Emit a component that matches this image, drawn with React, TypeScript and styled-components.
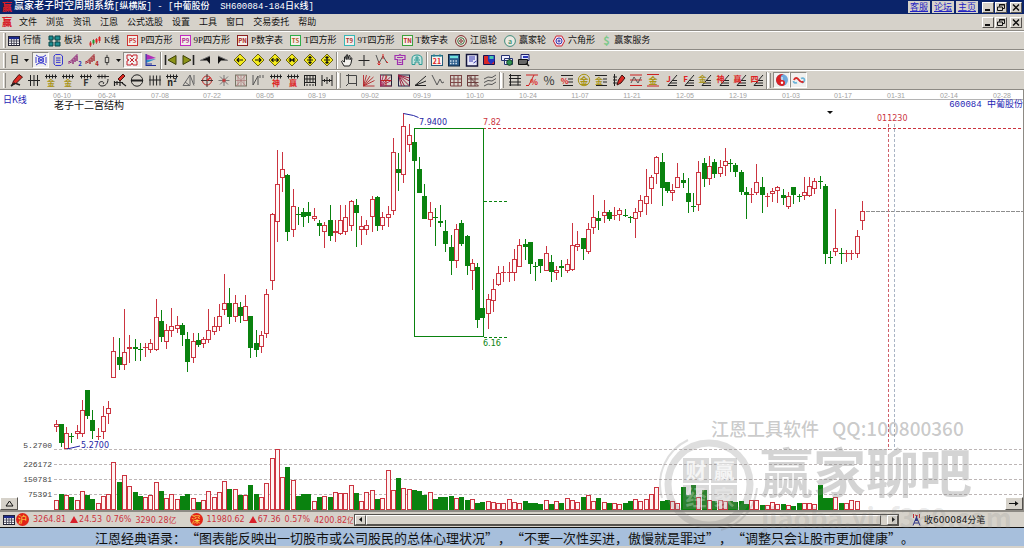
import React from "react";
import styled, { createGlobalStyle, css } from "styled-components";

const CJK = '"Noto Sans CJK SC", sans-serif';

const GlobalStyle = createGlobalStyle`
  * { box-sizing: border-box; }
  body { margin: 0; background: #d6d2ca; font-family: ${CJK}; font-size: 9px; color: #111; }
  button { font: inherit; padding: 0; margin: 0; border: 0; background: none; color: inherit; }
  svg { display: block; flex: none; }
`;

const RED = "#cb3440";
const GREEN = "#0a820f";

const raised = css`
  border: 1px solid;
  border-color: #fff #55524e #55524e #fff;
  background: #d6d2ca;
`;

/* ---------- window chrome ---------- */

const Window = styled.div`
  display: flex;
  flex-direction: column;
  min-height: 100vh;
`;

const TitleBar = styled.header`
  display: flex;
  align-items: center;
  height: 14px;
  padding: 0 2px;
  background: #0b246a;
  color: #fff;
`;

const Title = styled.h1`
  flex: 1;
  margin: 0 0 0 2px;
  font-family: "Liberation Mono", ${CJK};
  font-size: 10px;
  line-height: 13px;
  font-weight: 500;
  white-space: pre;
`;

const TitleCode = styled.span`
  font-size: 9px;
`;

const TitleLinks = styled.nav`
  display: flex;
  gap: 2px;
  margin-right: 4px;
`;

const TitleLink = styled.a`
  width: 22px;
  height: 12px;
  background: #d6d2ca;
  color: #2222c4;
  font-size: 9px;
  line-height: 11px;
  text-align: center;
  text-decoration: underline;
`;

const WinButtons = styled.div`
  display: flex;
  gap: 1px;
`;

const WinButton = styled.button`
  ${raised}
  display: grid;
  place-items: center;
  width: 12px;
  height: 11px;
  &:last-child { margin-left: 2px; }
`;

const MenuBar = styled.nav`
  display: flex;
  align-items: center;
  height: 17px;
  padding: 0 2px;
  gap: 9px;
  border-bottom: 1px solid #8d8a84;
  background: #d6d2ca;
`;

const MenuItem = styled.button`
  font-size: 9px;
  line-height: 12px;
  &:first-of-type { margin-left: -2px; }
`;

const Spacer = styled.div`
  flex: 1;
`;

const Bar = styled.div<{ $h: number }>`
  display: flex;
  align-items: center;
  height: ${(p) => p.$h}px;
  padding-left: 3px;
  border-top: 1px solid #fff;
  border-bottom: 1px solid #8d8a84;
  background: #d6d2ca;
`;

const Grip = styled.span`
  width: 3px;
  height: 15px;
  margin-right: 2px;
  border-left: 1px solid #fff;
  border-right: 1px solid #8d8a84;
`;

const Divider = styled.span`
  width: 2px;
  height: 17px;
  border-left: 1px solid #8d8a84;
  border-right: 1px solid #fff;
`;

const LabelRow = styled.div`
  display: flex;
  gap: 7px;
`;

const LabelButton = styled.button`
  display: flex;
  align-items: center;
  gap: 3px;
  font-family: "Liberation Serif", ${CJK};
  font-size: 9px;
  line-height: 13px;
  white-space: nowrap;
`;

const PeriodPicker = styled(LabelButton)`
  gap: 5px;
  width: 24px;
  padding-left: 2px;
  font-weight: 500;
`;

const IconGroup = styled.div<{ $w: number }>`
  display: grid;
  grid-auto-flow: column;
  grid-auto-columns: 1fr;
  width: ${(p) => p.$w}px;
`;

const IconButton = styled.button<{ $on?: boolean }>`
  display: grid;
  place-items: center;
  height: 16px;
  border: 1px solid transparent;
  ${(p) => p.$on && css`
    background: #f1f0ee;
    border-color: #8d8a84 #fff #fff #8d8a84;
  `}
`;

/* ---------- icons ---------- */

const Svg = ({ children, w = 14, h = 14, box }: { children: React.ReactNode; w?: number; h?: number; box?: string }) => (
  <svg width={w} height={h} viewBox={box ?? "0 0 14 14"} overflow="visible" fill="none" stroke="#222" strokeWidth="1" aria-hidden="true">
    {children}
  </svg>
);

const Glyph = ({ t, x = 7, y = 12, size = 8, fill = "#d22", weight = 700 }: { t: string; x?: number; y?: number; size?: number; fill?: string; weight?: number }) => (
  <text x={x} y={y} fontSize={size} fill={fill} stroke="none" fontWeight={weight} textAnchor="middle" fontFamily='"Noto Sans CJK SC", sans-serif'>{t}</text>
);

const TableIcon = () => (
  <Svg w={12} h={12} box="0 0 12 12">
    <rect x=".5" y="1.5" width="11" height="9" fill="#fff" stroke="#223" />
    <path d="M1 3h10" stroke="#1b2a8c" strokeWidth="2.4" />
    <path d="M1 6h10M1 8.4h10M3.5 4v6M6 4v6M8.5 4v6" stroke="#445" strokeWidth=".9" />
  </Svg>
);

const BlocksIcon = () => (
  <Svg w={13} h={12} box="0 0 13 12">
    <path d="M1 1h4v4H1zM7 1h5v4H7zM1 7h4v4H1zM7 7h5v4H7z" fill="#1c8f92" stroke="#0b4446" />
    <path d="M5 3h2M9 5v2M3 5v2" stroke="#0b4446" />
  </Svg>
);

const KIcon = () => (
  <Svg w={12} h={12} box="0 0 12 12">
    <path d="M1.5 6v6M4.5 4v6M7.5 3v6M10.5 1v7" stroke="#933" strokeWidth=".7" />
    <path d="M1.5 7.5v3M7.5 4v3.5" stroke="#e02020" strokeWidth="2" />
    <path d="M4.5 5v3.5" stroke="#1a9a30" strokeWidth="2" />
    <path d="M10.5 2v4" stroke="#e02020" strokeWidth="2" />
  </Svg>
);

const Boxed = ({ t, frame, ink }: { t: string; frame: string; ink: string }) => (
  <Svg w={11} h={11} box="0 0 11 11">
    <rect x=".5" y=".5" width="10" height="10" fill="#f4efe9" stroke={frame} />
    <Glyph t={t} x={5.5} y={8} size={6} fill={ink} />
  </Svg>
);

const Wheel = ({ a, b, t }: { a: string; b: string; t?: string }) => (
  <Svg w={12} h={12} box="0 0 12 12">
    <circle cx="6" cy="6" r="5.4" stroke={a} fill="#ece9e2" />
    {t ? <Glyph t={t} x={6} y={8.5} size={7} fill={b} /> : (
      <>
        <circle cx="6" cy="6" r="3.3" stroke={b} />
        <circle cx="6" cy="6" r="1.3" stroke={a} />
      </>
    )}
  </Svg>
);

const HexIcon = () => (
  <Svg w={12} h={12} box="0 0 12 12">
    <path d="M3.2 1h5.6L11.6 6 8.8 11H3.2L.4 6z" stroke="#c23" fill="#f2e4ee" />
    <circle cx="6" cy="6" r="3" stroke="#3238b0" />
    <circle cx="6" cy="6" r="1" stroke="#3238b0" />
  </Svg>
);

const DollarIcon = () => (
  <Svg w={9} h={12} box="0 0 9 12">
    <Glyph t="$" x={4.5} y={10} size={11} fill="#7cc98a" />
  </Svg>
);

const Diamond = ({ d }: { d: string }) => (
  <Svg>
    <path d="M7 1l6 6-6 6-6-6z" fill="#f4ec1c" stroke="#6c6410" />
    <path d={d} stroke="#111" strokeWidth="1.1" />
  </Svg>
);

const toolbar2a: [string, React.ReactNode, boolean?][] = [
  ["周期网", <Svg key="a"><g stroke="#3a3ad0"><path d="M2 2l3 2h4l3-2M2 12l3-2h4l3 2M2 4v6M12 4v6" /><circle cx="7" cy="7" r="2.5" /><path d="M4 5l6 4M10 5l-6 4" /></g></Svg>, true],
  ["文档", <Svg key="b"><path d="M3 3l1.5-1.5h5L11.5 3v8L10 12.5H4.5L3 11zM5 5h4.5M5 7.2h4.5M5 9.4h4.5" stroke="#3a3ad0" /></Svg>],
  ["二分线", <Svg key="c"><path d="M1 11V8l2 2V7h2v4V5h2v4V3h2v5V1" stroke="#93307c" /><Glyph t="2" x={12} y={13} size={6} fill="#2a2ab8" /></Svg>],
  ["四分线", <Svg key="d"><path d="M1 11V8l2 2V7h2v4V5h2v4V3h2v5V1" stroke="#a83038" /><Glyph t="4" x={12} y={13} size={6} fill="#b02020" /></Svg>],
];

const playRow: [string, React.ReactNode][] = [
  ["最前", <Svg key="1"><path d="M1.5 2v10" strokeWidth="1.6" /><path d="M12 2.5v9L4 7z" fill="#8c9418" stroke="#3c4008" /></Svg>],
  ["最后", <Svg key="2"><path d="M12.5 2v10" strokeWidth="1.6" /><path d="M2 2.5v9L10 7z" fill="#8c9418" stroke="#3c4008" /></Svg>],
  ["后退", <Svg key="3"><path d="M12 3v8L9 7.5H2z" fill="#111" stroke="none" /><path d="M12 3L2 7.5" stroke="#777" /></Svg>],
  ["前进", <Svg key="4"><path d="M2 3v8l3-3.5h7z" fill="#111" stroke="none" /><path d="M2 3l10 4.5" stroke="#777" /></Svg>],
  ["左移", <Diamond key="5" d="M4 7h6M6 5L4 7l2 2" />],
  ["右移", <Diamond key="6" d="M4 7h6M8 5l2 2-2 2" />],
  ["横向放大", <Diamond key="7" d="M3.5 7h7M5.5 5.2L3.5 7l2 1.8M8.5 5.2l2 1.8-2 1.8" />],
  ["横向缩小", <Diamond key="8" d="M3.5 7h7M4.5 5l2 2-2 2M9.5 5l-2 2 2 2" />],
  ["纵向放大", <Diamond key="9" d="M7 3.5v7M5.5 5L7 3.5 8.5 5M5.5 9L7 10.5 8.5 9M4 7h6" />],
  ["纵向缩小", <Diamond key="10" d="M7 3v8M5.5 4L7 5.5 8.5 4M5.5 10L7 8.5 8.5 10M4 7h6" />],
];

const handRow: [string, React.ReactNode][] = [
  ["平移", <Svg key="1"><path d="M4 13L1.5 8.5l1-.7L4.5 9V4l1-.5.8 3V2l1.2-.3.5 4.8L9 2.5l1 .3v4l1-2 1 .5-1 5L9.5 13z" fill="#f4f2ee" /></Svg>],
  ["十字光标", <Svg key="2"><path d="M7 2v11M1.5 7.5h11" /></Svg>],
  ["波段", <Svg key="3"><path d="M1 2l3 8 4-7 4 7" stroke="#555" /><path d="M4 8v4M8 1v5M2.5 10.5L4 12l1.5-1.5M11 8l2 2" stroke="#d22" /></Svg>],
  ["叠加", <Svg key="4"><path d="M2 2.5h4l1-1 1 1h4v4H9.5v5h-5v-5H2zM4 4.5h6M5.5 7h3M5.5 9.5h3" stroke="#a030b0" strokeWidth="1.2" /></Svg>],
  ["云图", <Svg key="5"><path d="M2 11.5V6c0-3 2-4 5-4s5 1 5 4v5.5H9V9H5v2.5zM5 5h4M4 7h6M7 3v5" stroke="#2c9a94" fill="#c4e2dd" /></Svg>],
];

const appRow: [string, React.ReactNode][] = [
  ["日历", <Svg key="1"><rect x="1.5" y="2.5" width="11" height="10" fill="#f8f4f0" stroke="#255a7a" /><path d="M1.5 3h11M4 1v3M10 1v3" stroke="#2c8a98" /><Glyph t="21" y={11} size={7} /></Svg>],
  ["计算器", <Svg key="2"><rect x="1.5" y="1.5" width="11" height="11.5" fill="#2c5d8c" stroke="#0c2440" /><path d="M3 4h8" stroke="#6fe0dc" strokeWidth="2.4" /><path d="M3 8h8M3 10.5h8" stroke="#d7e4ee" strokeWidth="1.3" strokeDasharray="1.5 1.2" /></Svg>],
  ["笔记", <Svg key="3"><rect x="1.5" y="1.5" width="11" height="11.5" fill="#e8e8fa" stroke="#14143a" strokeWidth="1.5" /><path d="M4 4h6M4 6h6M4 8h4M8.5 10l3-2" stroke="#3434a8" /></Svg>],
  ["保存", <Svg key="4"><path d="M1.5 2.5h11v9h-11z" fill="#d82828" stroke="#141450" /><path d="M6 2.5h6.5V8L9 11.5 6 8z" fill="#2434c0" stroke="none" /><path d="M7.5 3h4v3h-4z" fill="#46c6b0" stroke="none" /></Svg>],
  ["导出图片", <Svg key="5"><path d="M1.5 2.5h8v5h-8zM4.5 5.5h8v6h-8z" fill="#eef" stroke="#243070" /><circle cx="9.5" cy="9.5" r="2.8" fill="#2f8f50" stroke="#143c22" /></Svg>],
  ["打印", <Svg key="6"><path d="M4 1.5h8v6H4z" fill="#dfe6ff" stroke="#202068" /><path d="M1.5 6.5h9v5h-9z" fill="#666" stroke="#111" /><path d="M6 4h5" stroke="#2c38b8" strokeWidth="2" /><path d="M9 10l3 3" strokeWidth="1.5" /></Svg>],
];

const Comb = ({ t, fill, size = 8 }: { t: string; fill: string; size?: number }) => (
  <Svg>
    <path d="M1 3.5h12M2.5 1.5v4M5.5 1.5v4M8.5 1.5v4M11.5 1.5v4" />
    <Glyph t={t} y={13} size={size} fill={fill} />
  </Svg>
);

const GOLD = "#a89418";

const drawA: [string, React.ReactNode][] = [
  ["画笔", <Svg key="1"><path d="M2 12l1.5-4L9 1.5 12.5 4 6 10.5z" fill="#dc2a24" stroke="#4a1410" /><path d="M1 13l4-3M6 10.5l4 1.5" strokeWidth="1.6" /></Svg>],
  ["等距线", <Svg key="2"><path d="M1 7.5h12M3.5 2v11M7 2v11M10.5 2v11" /></Svg>],
  ["黄金时间", <Comb key="3" t="金" fill={GOLD} />],
  ["黄金周期", <Comb key="4" t="金" fill={GOLD} />],
  ["斐波那契", <Comb key="5" t="F" fill="#333" size={9} />],
  ["螺旋", <Svg key="6"><path d="M1 3.5h12M3 1.5v4M6 1.5v4M9 1.5v4M12 6c0 5-3 7-6 7s-4-3-2-4 5 0 3 2" /></Svg>],
  ["标尺", <Svg key="7"><path d="M5 6l5-5 2 2-5 5z" fill="#dc2a24" stroke="#4a1410" /><path d="M1 9.5h9M1.5 8v5M4 8v4M7 8v5M9 10l4 3" strokeWidth="1.2" /></Svg>],
  ["圆周", <Svg key="8"><circle cx="7" cy="7.5" r="5.7" /><path d="M1 7.5h12M3 6v3M5 6v3M7 6v3M9 6v3M11 6v3" /></Svg>],
  ["周期线", <Svg key="9"><path d="M1 7h12M2 2.5v10M5.3 2.5v10M8.6 2.5v10M12 2.5v10" /></Svg>],
  ["平方", <Comb key="10" t="n²" fill="#222" size={9} />],
  ["三角", <Svg key="11"><path d="M1 12.5L8 2v10.5zM8 2l4 10.5M3 9l4 3M12 2v9" stroke="#666" /></Svg>],
  ["江恩圆", <Svg key="12"><circle cx="7" cy="7.5" r="4.5" stroke="#b22" /><path d="M7 1v13M1 7.5h12" stroke="#433" /><path d="M7 7.5l3.5-3" stroke="#d22" strokeWidth="1.5" /></Svg>],
  ["星形", <Svg key="13"><path d="M7 2v11M1.5 7.5h11M3 3.5l8 8M11 3.5l-8 8" stroke="#777" /><circle cx="7" cy="7.5" r="1.5" fill="#c33" stroke="#a55" /></Svg>],
  ["网格", <Svg key="14"><rect x="1.5" y="2" width="11" height="11" stroke="#776" /><path d="M2 2l10 11M12 2L2 13M7 2v11M1.5 7.5h11M4 2v11M10 2v11" stroke="#a77" strokeWidth=".7" /></Svg>],
  ["折线", <Svg key="15"><path d="M2 2v10M2 12l5-9v9M9 2v3M12 2v3" stroke="#555" /></Svg>],
  ["神奇数", <Comb key="16" t="神" fill="#d22" />],
  ["赢家数", <Comb key="17" t="赢" fill="#d22" />],
  ["格线", <Svg key="18"><path d="M1.5 2v11M12.5 2v11M1.5 2.5h11M1.5 9.5h11M4 2.5v7M7 2.5v7M10 2.5v7M1.5 6h11M3 12h2M6 12h2M9 12h2" /></Svg>],
  ["区间", <Svg key="19"><path d="M2 2v11M12 2v11M7 4v7M2 7.5h10M4.5 6v3M9.5 6v3" /></Svg>],
];

const Fan = ({ c }: { c: string }) => <path d="M1.5 13V2M1.5 13L4.5 2M1.5 13L8 3M1.5 13l10-9M1.5 13l11-5.5M1.5 13h11" stroke={c} strokeWidth=".9" />;

const drawB: [string, React.ReactNode][] = [
  ["矩形", <Svg key="1"><path d="M3.5 2.5h8v8h-8zM3.5 10.5L1 13M1 2.5h3M3.5 1v3M11.5 9v4" stroke="#444" /></Svg>],
  ["扇形", <Svg key="2"><Fan c="#b3262a" /></Svg>],
  ["江恩箱", <Svg key="3"><rect x="1.5" y="2" width="11" height="11" stroke="#223" /><Fan c="#a8285a" /><path d="M7 2v11M2 7.5h10" stroke="#b22" /></Svg>],
  ["反向箱", <Svg key="4"><rect x="1.5" y="2" width="11" height="11" stroke="#224" /><path d="M1.5 2l11 11M1.5 2l6 11M1.5 2l11 6M1.5 2l3 11M1.5 2l11 3" stroke="#9c1f42" /></Svg>],
  ["速度线", <Svg key="5"><path d="M1 12.5L12 3M1 12.5L12 8M1 12.5h11" /></Svg>],
  ["波浪", <Svg key="6"><path d="M1 2l5 10 3-6 2 4 2-1" stroke="#555" /></Svg>],
  ["方格", <Svg key="7"><path d="M1.5 2v11M5 2v11M9 2v11M12.5 2v11M1.5 2.5h11M1.5 6h11M1.5 9.5h11M1.5 13h11" stroke="#7c4444" /></Svg>],
  ["角度格", <Svg key="8"><path d="M1.5 2v11h11M5 2v11M9 2v11M1.5 2.5h11M1.5 6h11M1.5 9.5h11M1.5 2l11 11" stroke="#6a3c3c" /></Svg>],
  ["平行线", <Svg key="9"><path d="M1 6l4-2 4 .5L13 2M1 9.5l4-2 4 .5 4-2.5M1 13l4-2 4 .5L13 9" stroke="#555" /></Svg>],
];

const TopBot = ({ t, c, line = "#333" }: { t: string; c: string; line?: string }) => (
  <Svg><path d="M1 1.5h12M1 13h12" stroke={line} /><Glyph t={t} y={11} size={9} fill={c} /></Svg>
);

const Angle = ({ t, c }: { t: string; c: string }) => (
  <Svg><path d="M4 12.5L13 2M4 12.5h9M6 10h7M8 7.5h5" stroke="#222" /><Glyph t={t} x={4.5} y={9} size={8} fill={c} /></Svg>
);

const drawC: [string, React.ReactNode][] = [
  ["刻度", <Svg key="1"><path d="M2.5 1v12M1 2.5h12M1 5.5h12M1 9h12M1 12h12M10 2.5v10" /></Svg>],
  ["百分比一", <Svg key="2"><path d="M1 2h12M1 12.5h3M4 12L9 2" stroke="#c22" /><Glyph t="%" x={9} y={12} size={8} /></Svg>],
  ["百分比", <Svg key="3"><Glyph t="%" y={12} size={12} fill="#333" weight={400} /></Svg>],
  ["百分比线", <Svg key="4"><path d="M1 2.5h12M8 6h5M8 9h5M3 12.5h10" /><Glyph t="%" x={4.5} y={11} size={8} /></Svg>],
  ["黄金圆", <Svg key="5"><circle cx="7" cy="7" r="5.7" stroke={GOLD} /><Glyph t="金" y={10.5} size={9} fill={GOLD} /></Svg>],
  ["黄金线", <Svg key="6"><path d="M1 2.5h12M9 6h4M9 9h4M2 12.5h11" /><Glyph t="金" x={5} y={11} size={8} fill={GOLD} /></Svg>],
  ["笔标尺", <Svg key="7"><path d="M2.5 1v12M1 4h4M1 7h4M1 10h4" /><path d="M5 12l1.5-5L10 2l3 3-4 5z" fill="#dc2a24" stroke="#3a1410" /></Svg>],
  ["通道", <Svg key="8"><path d="M1 2h12M1 12.5h12M1 7h12" stroke="#c22" /><path d="M2 10l3-6 4 6 3-6" stroke="#555" /></Svg>],
  ["金通道", <TopBot key="9" t="金" c={GOLD} line="#c22" />],
  ["江恩角", <Angle key="10" t="J" c="#d22" />],
  ["F角", <Angle key="11" t="F" c="#d22" />],
  ["金角", <Angle key="12" t="金" c={GOLD} />],
  ["神角", <Angle key="13" t="神" c="#d22" />],
  ["赢角", <Angle key="14" t="赢" c="#d22" />],
  ["四角", <Angle key="15" t="四" c="#d22" />],
];

const drawD: [string, React.ReactNode, boolean][] = [
  ["太极", <Svg key="1"><circle cx="7" cy="7" r="6" fill="#6fa8dc" stroke="none" /><path d="M7 1a6 6 0 1 0 0 12 3 3 0 0 0 0-6 3 3 0 0 1 2-5.5z" fill="#da2023" stroke="none" /><circle cx="7" cy="9.8" r="1.2" fill="#fff" stroke="none" /><path d="M7 4v3" stroke="#fff" /></Svg>, true],
  ["无限", <Svg key="2"><path d="M5 9.5C3 10.5 1.5 9.5 1.5 8M9 5.5c2-1 3.5 0 3.5 1.5S11 9.5 10 9.5" stroke="#6db4d8" strokeWidth="1.8" /><path d="M2 7c1-2.5 3-2.5 4.5-.5S9.500 10 11.500 8.500" stroke="#d62a2a" strokeWidth="2" /></Svg>, true],
];

const labelled: [string, React.ReactNode][] = [
  ["行情", <TableIcon key="a" />],
  ["板块", <BlocksIcon key="b" />],
  ["K线", <KIcon key="c" />],
  ["P四方形", <Boxed key="d" t="PS" frame="#c33" ink="#c33" />],
  ["9P四方形", <Boxed key="e" t="P9" frame="#c22cc2" ink="#b02a90" />],
  ["P数字表", <Boxed key="f" t="PN" frame="#8a2020" ink="#a22" />],
  ["T四方形", <Boxed key="g" t="TS" frame="#2fae4a" ink="#b55a28" />],
  ["9T四方形", <Boxed key="h" t="T9" frame="#38b7b7" ink="#a33" />],
  ["T数字表", <Boxed key="i" t="TN" frame="#3da03d" ink="#b22" />],
  ["江恩轮", <Wheel key="j" a="#7c2424" b="#3b6a3b" />],
  ["赢家轮", <Wheel key="k" a="#3f8c7c" b="#4a9a78" t="a" />],
  ["六角形", <HexIcon key="l" />],
  ["赢家服务", <DollarIcon key="m" />],
];

const Buttons = ({ items }: { items: [string, React.ReactNode, boolean?][] }) => (
  <>
    {items.map(([name, icon, on]) => (
      <IconButton key={name} $on={on} aria-label={name} title={name}>{icon}</IconButton>
    ))}
  </>
);

const WindowControls = () => (
  <WinButtons>
    <WinButton aria-label="最小化"><svg width="8" height="7"><path d="M1 6h5" stroke="#111" strokeWidth="2" /></svg></WinButton>
    <WinButton aria-label="还原"><svg width="8" height="7" fill="none" stroke="#111"><path d="M2.5 2.5v-2h5v4h-2M.5 3h5v3.5h-5zM2 1h6" /></svg></WinButton>
    <WinButton aria-label="关闭"><svg width="8" height="7"><path d="M1 .5l6 6M7 .5l-6 6" stroke="#111" strokeWidth="1.5" /></svg></WinButton>
  </WinButtons>
);

const Logo = () => (
  <svg width="10" height="12" viewBox="0 0 10 12" overflow="visible" aria-hidden="true">
    <text x="5" y="10" fontSize="10" fontWeight="900" textAnchor="middle" fill="#d81e28" fontFamily='"Noto Sans CJK SC", sans-serif'>赢</text>
  </svg>
);

/* ---------- chart ---------- */

const ChartArea = styled.main`
  position: relative;
  flex: 1;
  min-height: 420px;
  background: #fff;
  border-right: 1px solid #8d8a84;
`;

const Plot = styled.svg`
  width: 100%;
  height: 420px;
  font-family: "DejaVu Sans", ${CJK};
  font-size: 8px;
`;

const Period = styled.span`
  position: absolute;
  left: 3px;
  top: 3px;
  color: #2424b4;
  font-size: 9px;
  line-height: 13px;
`;

const Stock = styled.span`
  position: absolute;
  right: 0;
  top: 9px;
  color: #2424b4;
  font-family: "Liberation Mono", ${CJK};
  font-size: 9px;
  line-height: 13px;
  white-space: pre;
`;

const CornerButton = styled.button<{ $side: "left" | "right" }>`
  ${raised}
  position: absolute;
  bottom: 0;
  ${(p) => p.$side}: 0;
  display: grid;
  place-items: center;
  width: 18px;
  height: 13px;
`;

const Watermark = styled.svg`
  position: absolute;
  right: 0;
  bottom: -38px;
  z-index: 2;
  pointer-events: none;
  font-family: ${CJK};
`;

const STEP = 5.27;
const FIRST_X = 55.5;

// Each block: vertical base, then candles as "colour high bodyTop bodyBottom low", three units to a pixel.
const priceBlocks: [number, string][] = [
  [540, `r 450 463 470 485|g 463 463 518 532|r 470 490 538 538|g 489 499 499 518|r 466 482 493 508|r 391 421 493 500|g 361 361 438 446|g 419 451 482 508|r 475 498 498 510|r 409 439 487 508|r 393 415 431 463|r 202 244 325 325|g 205 262 284 300|r 118 247 284 300|r 195 232 238 280|g 208 232 238 272|g 220 236 240 272|r 220 232 232 262|r 208 220 240 250|r 88 142 241 244|g 121 152 200 216|r 163 181 217 236|r 113 169 184 200|r 139 164 178 190|g 158 164 196 227|g 187 207 275 307|r 190 214 263 280|g 190 209 224 230|r 202 208 223 235|r 118 181 211 218|r 142 169 185 196|r 103 139 172 182|r 12 100 121 136|g 53 100 140 161|r 74 100 140 157|g 96 111 137 160|r 74 107 154 154|g 137 139 233 265|g 181 220 239 262|r 184 196 230 250|r 57 73 193 205`],
  [60, `r 310 313 514 540|r 121 222 337 395|r 127 178 205 245|g 193 195 367 394|r 238 289 361 382|g 291 312 315 345|g 294 305 321 350|g 276 307 317 340|r 294 319 328 334|g 330 340 349 378|r 337 346 367 413|g 286 330 378 394|r 330 364 370 397|r 286 331 371 374|r 286 322 367 374|r 270 272 349 362|g 268 286 310 412|r 319 349 361 406|r 331 346 361 376|r 259 268 322 367|g 259 262 349 364|r 307 322 349 361|r 289 313 325 350|r 83 127 304 315|g 130 178 188 244|r 10 49 196 219|r 43 76 106 125|g 89 97 152 152|g 140 177 249 249|g 223 258 328 328|r 277 307 331 350|g 293 322 322 407|g 285 334 340 352|g 331 364 401 427|g 376 412 454 496|r 341 358 454 473|g 331 340 401 407|g 376 379 467 496|r 447 460 484 540`],
  [270, `g 250 260 419 443|g 384 384 413 413|r 343 358 403 448|r 298 328 364 397|r 257 280 314 319|r 257 276 276 307|r 247 276 276 307|r 208 238 280 304|r 178 196 262 262|g 178 192 202 240|g 187 187 251 281|g 247 259 259 302|g 237 238 257 280|r 199 220 274 274|g 226 247 275 307|r 259 270 278 301|g 240 258 263 292|r 237 253 274 280|r 128 196 269 274|r 154 193 202 214|g 175 175 206 241|r 130 148 217 221|r 44 112 145 163|g 93 113 122 151|r 60 97 107 128|g 89 97 116 122|r 82 106 106 119|r 85 91 104 122|g 88 106 106 112|g 108 110 110 130|r 85 97 118 173`],
  [120, `r 195 211 247 262|r 116 199 223 256|r 136 142 178 221|r 77 82 133 163|g 69 97 173 228|g 157 157 182 190|r 163 180 190 214|r 100 142 173 173|g 130 151 160 175|g 143 190 217 250|g 190 229 229 245|r 94 127 226 242|g 84 100 148 170|r 78 107 148 166|g 88 97 133 145|r 90 112 133 142|r 54 94 107 137|g 86 100 100 125|g 99 104 127 140|g 120 127 185 196|g 170 187 194 266|r 175 191 194 218|r 103 157 190 196|g 140 172 196 250|r 190 199 202 232|r 173 184 193 217|r 168 172 184 219|g 178 196 205 226|r 187 199 232 238|g 172 172 194 221|g 193 199 199 215|r 140 187 199 209|r 140 169 199 202|r 145 152 178 193|g 137 152 155 178|g 163 168 373 402|g 364 380 380 402|r 236 353 367 378|g 354 370 373 402|r 360 370 373 396|r 360 370 370 390|r 301 319 373 383|r 214 244 272 299`],
];

// Bar tops measured from each block's floor, three units to a pixel.
const volumeBlocks: [number, string][] = [
  [450, "423 406 409 414 423 395 409 420 433 412 406 310 368 348 382 400 412 415 409 370 397 418 406 420 412 404 418 429 424 397 415 400 367 391 391 409 409 379 405"],
  [328, "292 250 174 148 232 202 240 289 282 282 304 291 289 292 277 280 280 256 280 304 277 272 298 295 210 270 235 265 267 270 274 286 276 297 293 293 289 294 291 301 297 311 307 304 307 311 310 298 307 309 303 311 309 312 302 313 303"],
  [328, "310 295 300 306 291 286 303 295 307 310 311 312 309 304 298 304 298 283 262 303 301 304 309 262 286 256 291 271 300 304 302 303 303 306 303 313 301 302 316 316 307 312 313 316 318 310 311 311 312 256 295 295 291 310 310 301 304"],
];

const toPx = (v: number) => Math.round(v / 3);

const candles = priceBlocks.flatMap(([base, text]) =>
  text.split("|").map((row) => {
    const [colour, ...n] = row.split(" ");
    const [high, top, bottom, low] = n.map((v) => toPx(base + Number(v)));
    return { up: colour === "r", high, top, bottom, low };
  }),
);

const volumes = volumeBlocks.flatMap(([floor, text]) => text.split(" ").map((v) => toPx(floor - Number(v))));

const columnX = (i: number) => Math.round(FIRST_X + STEP * i);

const Candle = ({ i, up, high, top, bottom, low }: { i: number; up: boolean; high: number; top: number; bottom: number; low: number }) => {
  const x = columnX(i);
  const ink = up ? RED : GREEN;
  const tall = bottom - top >= 2;
  return (
    <g stroke={ink}>
      <path d={`M${x + 0.5} ${high}V${low}`} />
      {tall
        ? <rect x={x - 1.5} y={top + 0.5} width="4" height={bottom - top - 1 || 1} fill={up ? "#fff8f8" : ink} />
        : <path d={`M${x - 2} ${top + 0.5}h5`} />}
    </g>
  );
};

const FLOOR = 420;

const VolumeBar = ({ i, h, up }: { i: number; h: number; up: boolean }) => (
  <rect x={columnX(i) - 1.5} y={FLOOR - h - 0.5} width="4" height={h} fill={up ? "#fff3f3" : GREEN} stroke={up ? RED : GREEN} />
);

const dates: [number, string][] = [
  [62, "06-10"], [107, "06-24"], [160, "07-08"], [212, "07-22"], [265, "08-05"], [317, "08-19"], [370, "09-02"],
  [422, "09-19"], [475, "10-10"], [528, "10-24"], [580, "11-07"], [632, "11-21"], [685, "12-05"], [738, "12-19"],
  [791, "01-03"], [843, "01-17"], [896, "01-31"], [949, "02-14"], [1002, "02-28"],
];

const gridLines: [number, string][] = [[359, "5.2700"], [374, "226172"], [389, "150781"], [404, "75391"]];

const Chart = () => (
  <Plot role="img" aria-label="600084 日K线图">
    <path d="M54 9.5H3000" stroke="#b4b4b4" />
    {dates.map(([x, d]) => (
      <text key={d} x={x} y="8" fill="#a2a2a2" fontSize="7" textAnchor="middle" fontFamily='"Liberation Sans", sans-serif'>{d}</text>
    ))}
    <text x="54" y="19" fill="#111" fontSize="10" fontFamily='"Noto Sans CJK SC", sans-serif'>老子十二宫结构</text>

    {gridLines.map(([y, label]) => (
      <g key={label}>
        <path d={`M54 ${y + 0.5}H3000`} stroke="#bdb6b6" strokeDasharray="3 2" />
        <text x="52" y={y === 359 ? 358 : y + 3} fill="#444" textAnchor="end" fontFamily='"Liberation Mono", monospace'>{label}</text>
      </g>
    ))}

    {volumes.map((h, i) => <VolumeBar key={i} i={i} h={h} up={candles[i].up} />)}
    {candles.map((c, i) => <Candle key={i} i={i} {...c} />)}

    <path d="M483 38.5H3000" stroke={RED} strokeDasharray="3 2" />
    <path d="M866 121.5H3000" stroke="#8e8e8e" strokeDasharray="4 1" />
    <path d="M888.5 34V360" stroke="#d0606a" strokeDasharray="3 2" />
    <path d="M894.5 34V360" stroke="#a9b4c4" strokeDasharray="3 2" />

    <rect x="414.5" y="38.5" width="69" height="208" fill="none" stroke={GREEN} />
    <path d="M484 111.5h25M484 247.5h25" stroke={GREEN} strokeDasharray="3 2" />
    <path d="M403.5 23.5l10 2 5 2M67 359l13-3" stroke="#2424a4" fill="none" />
    <path d="M827 21h6l-3 3z" fill="#111" />

    <text x="419" y="35" fill="#2424a4">7.9400</text>
    <text x="81" y="358" fill="#2424a4">5.2700</text>
    <text x="483" y="35" fill={RED}>7.82</text>
    <text x="483" y="256" fill={GREEN}>6.16</text>
    <text x="877" y="31" fill={RED}>011230</text>
  </Plot>
);

const WatermarkArt = () => (
  <Watermark width="364" height="138" viewBox="0 -20 364 138" aria-hidden="true">
    <g fill="#808080" fillOpacity=".42" fontWeight="500">
      <text x="52" y="6" fontSize="18">江恩工具软件</text>
      <text x="173" y="6" fontSize="19">QQ:100800360</text>
    </g>
    <g fill="#808080" fontWeight="700">
      <text x="101" y="63" fontSize="53" fillOpacity=".34">赢家聊吧</text>
      <text x="102" y="98" fontSize="27" fillOpacity=".18">jiaoba.yjcf360.com</text>
    </g>
    <g fill="none" stroke="#808080" strokeOpacity=".26">
      <circle cx="50" cy="54" r="41" strokeWidth="7" />
      <path d="M3 68A49 49 0 0 1 29 10M98 58A48 48 0 0 1 62 100" strokeWidth="2" />
    </g>
    <g fill="#808080" fillOpacity=".3">
      <rect x="24" y="28" width="26" height="25" />
      <rect x="52" y="28" width="26" height="25" />
      <rect x="24" y="55" width="26" height="24" />
      <rect x="52" y="55" width="26" height="24" />
    </g>
    <g fill="#fff" fontSize="21" fontWeight="700" textAnchor="middle">
      <g fillOpacity=".75">
        <text x="37" y="48">财</text>
        <text x="65" y="48">赢</text>
      </g>
      <g fillOpacity=".3">
        <text x="37" y="75">经</text>
        <text x="65" y="75">家</text>
      </g>
    </g>
  </Watermark>
);

/* ---------- status bar ---------- */

const StatusBar = styled.footer`
  display: flex;
  align-items: center;
  height: 18px;
  border-top: 2px solid #8d8a84;
  border-bottom: 1px solid #111;
  background: #d6d2ca;
`;

const Quotes = styled.div`
  display: flex;
  align-items: center;
  width: 353px;
  padding-left: 3px;
  overflow: hidden;
  color: ${RED};
  font-family: "DejaVu Sans", ${CJK};
  font-size: 8px;
  white-space: nowrap;
`;

const IndexQuote = styled.div`
  display: flex;
  flex: none;
  align-items: center;
  gap: 4px;
  margin-right: 12px;
`;

const Badge = styled.span`
  display: grid;
  place-items: center;
  width: 13px;
  height: 13px;
  margin-left: 1px;
  border-radius: 50%;
  background: #e02418;
  color: #ffe34a;
  font-size: 9px;
  line-height: 12px;
`;

const Rise = styled.span`
  display: flex;
  align-items: center;
  gap: 1px;
`;

const ScrollBar = styled.div`
  display: flex;
  flex: 1;
  height: 12px;
  margin-left: 1px;
  border: 1px solid #55524e;
`;

const ScrollArrow = styled.button`
  ${raised}
  display: grid;
  place-items: center;
  width: 11px;
`;

const Thumb = styled.div`
  ${raised}
  flex: 1;
  margin-right: 6px;
`;

const Feed = styled.div`
  display: flex;
  align-items: center;
  gap: 3px;
  width: 125px;
  padding-left: 13px;
  font-family: "DejaVu Sans", ${CJK};
  font-size: 9px;
`;

const Motto = styled.p`
  flex: none;
  height: 20px;
  margin: 0;
  padding: 0 95px;
  border-bottom: 2px solid #d6d2ca;
  background: #a7bfdc;
  color: #111;
  font-size: 13px;
  line-height: 19px;
  white-space: nowrap;
  text-spacing-trim: space-all;
`;

const Index = ({ mark, value, change, percent, amount }: { mark: string; value: string; change: string; percent: string; amount: string }) => (
  <IndexQuote>
    <Badge>{mark}</Badge>
    <span>{value}</span>
    <Rise>
      <svg width="8" height="7"><path d="M4 0l4 7H0z" fill="#d8202a" /></svg>
      {change}
    </Rise>
    <span>{percent}</span>
    <span>{amount}</span>
  </IndexQuote>
);

const App = () => (
  <Window>
    <GlobalStyle />
    <TitleBar>
      <Logo />
      <Title>赢家老子时空周期系统<TitleCode>[纵横版] - [中葡股份  SH600084-184日K线]</TitleCode></Title>
      <TitleLinks>
        <TitleLink href="#service">客服</TitleLink>
        <TitleLink href="#forum">论坛</TitleLink>
        <TitleLink href="#home">主页</TitleLink>
      </TitleLinks>
      <WindowControls />
    </TitleBar>

    <MenuBar>
      <Logo />
      {["文件", "浏览", "资讯", "江恩", "公式选股", "设置", "工具", "窗口", "交易委托", "帮助"].map((m) => (
        <MenuItem key={m}>{m}</MenuItem>
      ))}
      <Spacer />
      <WindowControls />
    </MenuBar>

    <Bar $h={19}>
      <Grip />
      <LabelRow>
        {labelled.map(([label, icon]) => (
          <LabelButton key={label}>{icon}{label}</LabelButton>
        ))}
      </LabelRow>
    </Bar>

    <Bar $h={20}>
      <Grip />
      <PeriodPicker aria-label="周期选择">日<svg width="5" height="3"><path d="M0 0h5L2.5 3z" fill="#111" /></svg></PeriodPicker>
      <IconGroup $w={69}><Buttons items={toolbar2a} /></IconGroup>
      <IconGroup $w={22}>
        <LabelButton aria-label="K线样式">
          <Svg w={12}><path d="M7 1v3M7 10v3M5 4h4v6H5z" /></Svg>
          <svg width="5" height="3"><path d="M0 0h5L2.5 3z" fill="#111" /></svg>
        </LabelButton>
      </IconGroup>
      <IconGroup $w={37}>
        <IconButton $on aria-label="九宫"><Svg><path d="M2 2h4l1 2 1-2h4v4l-2 1 2 1v4H8l-1-2-1 2H2V8l2-1-2-1zM5 5l4 4M9 5L5 9" stroke="#c4222c" /></Svg></IconButton>
        <IconButton aria-label="筹码分布"><Svg><path d="M2 1l10 4-10 2z" fill="#b02fb8" stroke="none" /><path d="M2 7l10-1-10 4z" fill="#2c8fc8" stroke="none" /><path d="M2 1v12M2 11h6M2 12.5h10" stroke="#22309c" /></Svg></IconButton>
      </IconGroup>
      <Divider />
      <IconGroup $w={174}><Buttons items={playRow} /></IconGroup>
      <Divider />
      <IconGroup $w={88}><Buttons items={handRow} /></IconGroup>
      <Divider />
      <IconGroup $w={105}><Buttons items={appRow} /></IconGroup>
    </Bar>

    <Bar $h={20}>
      <Grip />
      <IconGroup $w={328}><Buttons items={drawA} /></IconGroup>
      <Divider />
      <Grip />
      <IconGroup $w={156}><Buttons items={drawB} /></IconGroup>
      <Divider />
      <Grip />
      <IconGroup $w={260}><Buttons items={drawC} /></IconGroup>
      <Divider />
      <Grip />
      <IconGroup $w={34}><Buttons items={drawD} /></IconGroup>
    </Bar>

    <ChartArea>
      <Chart />
      <Period>日K线</Period>
      <Stock>600084 中葡股份</Stock>
      <CornerButton $side="left" aria-label="展开指标"><svg width="9" height="7" fill="none"><path d="M4.5 1l3.5 5H1z" stroke="#111" /></svg></CornerButton>
      <CornerButton $side="right" aria-label="向右"><svg width="10" height="7"><path d="M0 3.5h7" stroke="#111" /><path d="M6 1l3.5 2.5L6 6z" fill="#111" /></svg></CornerButton>
      <WatermarkArt />
    </ChartArea>

    <StatusBar>
      <Quotes>
        <TableIcon />
        <Index mark="沪" value="3264.81" change="24.53" percent="0.76%" amount="3290.28亿" />
        <Index mark="深" value="11980.62" change="67.36" percent="0.57%" amount="4200.82亿" />
      </Quotes>
      <ScrollBar>
        <ScrollArrow aria-label="向左滚动"><svg width="4" height="5"><path d="M3 0v5L0 2.5z" fill="#111" /></svg></ScrollArrow>
        <Thumb />
        <ScrollArrow aria-label="向右滚动"><svg width="4" height="5"><path d="M1 0v5l3-2.5z" fill="#111" /></svg></ScrollArrow>
      </ScrollBar>
      <Feed>
        <svg width="9" height="13" fill="none" stroke="#2a2f86" aria-hidden="true"><path d="M4.5 4L1 12.5M4.5 4L8 12.5M3 7.5h3M2 10h5M4.5 2v5" /><path d="M1.5 1v4M7.5 1v4M3 2l3 1" stroke="#c03038" /></svg>
        收600084分笔
      </Feed>
    </StatusBar>
    <Motto>江恩经典语录：“图表能反映出一切股市或公司股民的总体心理状况”，“不要一次性买进，傲慢就是罪过”，“调整只会让股市更加健康”。</Motto>
  </Window>
);

export default App;
